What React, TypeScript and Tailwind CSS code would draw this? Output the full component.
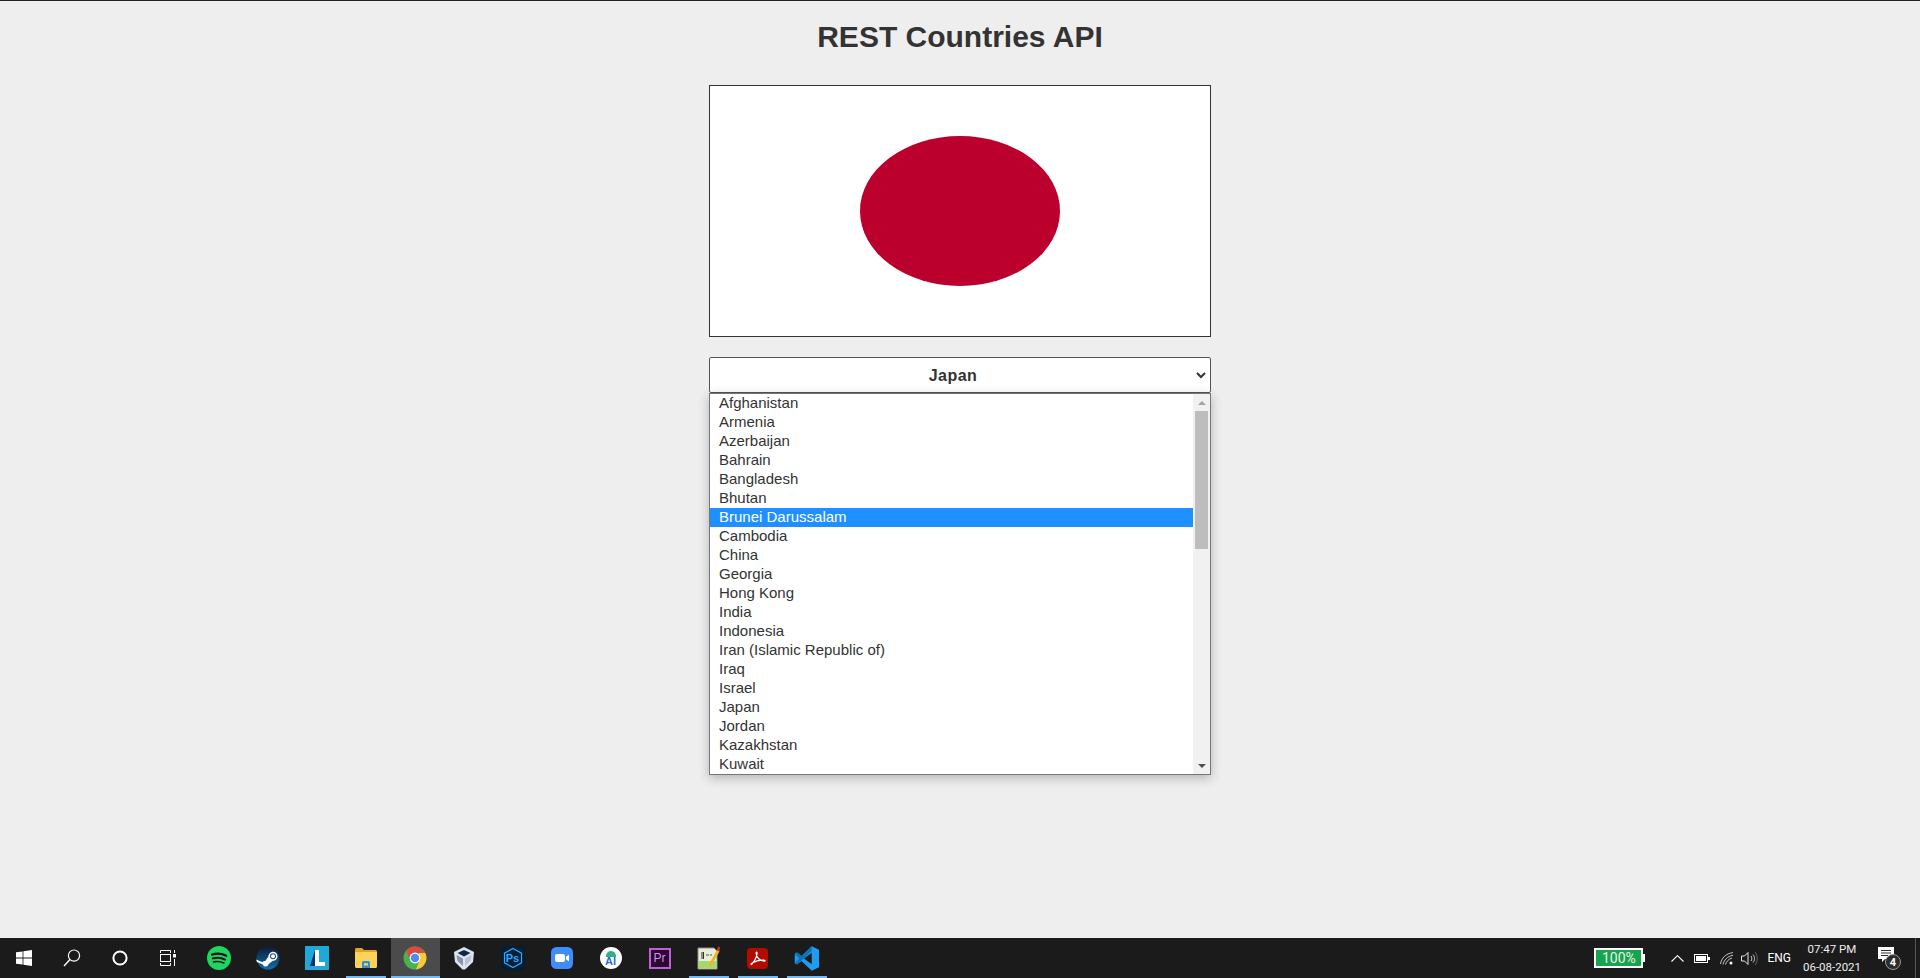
import React from "react";

const countries = ["Afghanistan","Armenia","Azerbaijan","Bahrain","Bangladesh","Bhutan","Brunei Darussalam","Cambodia","China","Georgia","Hong Kong","India","Indonesia","Iran (Islamic Republic of)","Iraq","Israel","Japan","Jordan","Kazakhstan","Kuwait"];

const WinIcon = () => (
  <svg width="16" height="16" viewBox="0 0 16 16" fill="#fff"><path d="M0 2.3 6.6 1.4V7.6H0Z"/><path d="M7.4 1.3 16 0V7.6H7.4Z"/><path d="M0 8.4H6.6V14.6L0 13.7Z"/><path d="M7.4 8.4H16V16L7.4 14.7Z"/></svg>
);
const SearchIcon = () => (
  <svg width="18" height="18" viewBox="0 0 18 18" fill="none" stroke="#fff"><circle cx="11" cy="6.6" r="5.6" strokeWidth="1.2"/><path d="M7 10.6 1 17" strokeWidth="1.4"/></svg>
);
const CortanaIcon = () => (
  <svg width="16" height="16" viewBox="0 0 16 16" fill="none"><circle cx="8" cy="8" r="6.6" stroke="#fff" strokeWidth="2"/></svg>
);
const TaskIcon = () => (
  <svg width="16" height="16" viewBox="0 0 16 16" fill="none" stroke="#fff" strokeWidth="1"><path d="M0.5 0.5H10.5M0.5 3V0.5M10.5 3V0.5"/><rect x="0.5" y="4.5" width="10" height="7"/><path d="M0.5 15.5H10.5M0.5 13V15.5M10.5 13V15.5"/><path d="M14.5 0V3"/><rect x="13" y="4" width="3" height="3.5" fill="#fff" stroke="none"/><path d="M14.5 9V16"/></svg>
);
const SpotifyIcon = () => (
  <svg width="24" height="24" viewBox="0 0 24 24" fill="none"><circle cx="12" cy="12" r="12" fill="#1ed760"/><path d="M5 8.6C9.5 7.3 15 7.6 19.2 9.8" stroke="#111" strokeWidth="2.2" strokeLinecap="round"/><path d="M5.8 12.4C9.8 11.3 14.6 11.7 18 13.6" stroke="#111" strokeWidth="1.9" strokeLinecap="round"/><path d="M6.6 15.9C10 15.1 13.8 15.4 16.8 17" stroke="#111" strokeWidth="1.6" strokeLinecap="round"/></svg>
);
const SteamIcon = () => (
  <svg width="24" height="24" viewBox="0 0 24 24"><defs><linearGradient id="st" x1="0" y1="0" x2="0" y2="1"><stop offset="0" stopColor="#0d1b3a"/><stop offset="1" stopColor="#0f6ea8"/></linearGradient></defs><circle cx="12" cy="12" r="11.5" fill="url(#st)"/><path d="M0 13.5 6.5 16.2C7 15.2 8.4 14.8 9.3 15L12.4 10.6C12.5 8 14.5 5.8 17 5.8C19.6 5.8 21.5 7.9 21.5 10.3C21.5 12.8 19.4 14.9 17 14.8L12.6 18C12.4 19.6 11 20.6 9.6 20.5C8.2 20.4 7.2 19.5 6.8 18.4L1 16Z" fill="#fff"/><circle cx="17" cy="10.3" r="3" fill="#1a4a78"/><circle cx="17" cy="10.3" r="2" fill="#fff"/></svg>
);
const LIcon = () => (
  <svg width="24" height="24" viewBox="0 0 24 24"><rect width="24" height="24" fill="#1fa9d8"/><path d="M10 4 5 20H10Z" fill="#0a2f7a"/><path d="M10 4H14V16H20V20H10Z" fill="#fff"/></svg>
);
const FolderIcon = () => (
  <svg width="22" height="20" viewBox="0 0 22 20"><path d="M0 1.5C0 .7.5 0 1.3 0H7L9 2H20.5C21.3 2 22 2.700 22 3.500V6H0Z" fill="#e0a526"/><path d="M0 4H22V18.500C22 19.300 21.300 20 20.500 20H1.500C.7 20 0 19.300 0 18.500Z" fill="#fbd25a"/><path d="M7 20V14.500C7 14 7.500 13 8.500 13H13.500C14.500 13 15 14 15 14.500V20H13V15.500H9V20Z" fill="#2f8fd8"/><rect x="7" y="17" width="8" height="3" fill="#2f8fd8"/><rect x="9" y="15.500" width="4" height="2" fill="#fbd25a"/></svg>
);
const ChromeIcon = () => (
  <svg width="24" height="24" viewBox="0 0 24 24"><circle cx="12" cy="12" r="11.500" fill="#4caf50"/><path d="M12 .5A11.500 11.500 0 0 1 22 6.600L12 7.500 5.500 11 3.400 4.400A11.500 11.500 0 0 1 12 .5Z" fill="#dd4b3e"/><path d="M22.300 7A11.500 11.500 0 0 1 13 23.400L16.500 14.500 16 7Z" fill="#fcc934"/><circle cx="12" cy="12" r="5.400" fill="#fff"/><circle cx="12" cy="12" r="4.200" fill="#4c8bf5"/></svg>
);
const VBoxIcon = () => (
  <svg width="20" height="23" viewBox="0 0 20 23"><path d="M10 0 20 5 19 15 11 22.500H8.500L1 15 0 5Z" fill="#dfe5ef"/><path d="M10 3 16.500 6 10 9.500 3.500 6Z" fill="#0f2750"/><path d="M2.500 8 9 11.500V19L3.500 14Z" fill="#8a96ab"/><path d="M17.500 8 11 11.500V19L16.500 14Z" fill="#b8c3d6"/></svg>
);
const PsIcon = () => (
  <div className="w-6 h-6 rounded-[4px] bg-[#001e36] relative flex items-center justify-center">
    <svg className="absolute inset-0" width="24" height="24" viewBox="0 0 24 24" fill="none"><path d="M12 2.500 20.500 7.200V16.800L12 21.500 3.500 16.800V7.200Z" stroke="#31a8ff" strokeWidth="1.200"/></svg>
    <span className="relative text-[11px] leading-none font-bold text-[#31a8ff] font-['Liberation_Sans',sans-serif]">Ps</span>
  </div>
);
const ZoomIcon = () => (
  <svg width="22" height="22" viewBox="0 0 22 22"><rect width="22" height="22" rx="5.500" fill="#3f8cff"/><rect x="4" y="7" width="10" height="8" rx="2" fill="#fff"/><path d="M15 9.800 18 7.600V14.400L15 12.200Z" fill="#fff"/></svg>
);
const StudioIcon = () => (
  <div className="w-[22px] h-[22px] rounded-full bg-white relative flex items-end justify-center overflow-hidden">
    <div className="absolute top-[4px] left-[6px] w-[10px] h-[6px] rounded-t-full bg-[#2fae8a]"></div>
    <span className="relative mb-[2px] text-[11px] leading-none font-bold text-[#2b6cd6] font-['Liberation_Sans',sans-serif]">AI</span>
  </div>
);
const PrIcon = () => (
  <div className="w-[22px] h-[21px] bg-[#2a0a33] border-2 border-[#c25ed9] flex items-center justify-center">
    <span className="text-[12px] leading-none text-[#d98df0] font-['Liberation_Sans',sans-serif]">Pr</span>
  </div>
);
const NotepadIcon = () => (
  <svg width="23" height="24" viewBox="0 0 23 24"><path d="M1 2H17L20 5V23H1Z" fill="#e8efd8" stroke="#8a8f80"/><rect x="2" y="15" width="17" height="7.500" fill="#a6d96a"/><path d="M5 6V13M6.500 6V13" stroke="#333" strokeWidth="1"/><path d="M9 9H12M13 9H15" stroke="#555"/><path d="M12 18 20 4 22.500 5.500 14.500 19.500 11.500 21Z" fill="#f0b429"/><path d="M20 4 21 .5 23 1.500 22.500 5.500Z" fill="#c0392b"/></svg>
);
const PdfIcon = () => (
  <svg width="21" height="21" viewBox="0 0 21 21" fill="none"><rect width="21" height="21" rx="4" fill="#b30b00"/><path d="M4 16C6.500 15 9.500 10.500 10 5.500C10.200 3.800 9 3.800 9.200 5.500C9.700 9.500 12.500 12.500 17 13C18.500 13.200 18.500 12.200 17 12.100C13 11.700 7 13.500 4.500 15.500C3.500 16.500 4.300 17 5 16Z" stroke="#fff" strokeWidth="1.300"/></svg>
);
const VSCodeIcon = () => (
  <svg width="25" height="25" viewBox="0 0 100 100"><path d="M71 99 100 85V15L71 1 30 40 12 26 3 31V69L12 74 30 60Z" fill="#1f9cf0"/><path d="M71 1 30 40 12 26 3 31 21 50 3 69 12 74 71 20Z" fill="#0b72b9"/><path d="M71 27V73L40 50Z" fill="#1a1a1a"/></svg>
);

const apps = [
  { icon: <SpotifyIcon /> }, { icon: <SteamIcon /> }, { icon: <LIcon /> },
  { icon: <FolderIcon />, bar: "short" }, { icon: <ChromeIcon />, bar: "active" },
  { icon: <VBoxIcon /> }, { icon: <PsIcon /> }, { icon: <ZoomIcon /> }, { icon: <StudioIcon /> },
  { icon: <PrIcon /> }, { icon: <NotepadIcon />, bar: "short" }, { icon: <PdfIcon />, bar: "short" }, { icon: <VSCodeIcon />, bar: "short" },
];

export default function App() {
  return (
    <div className="h-[978px] flex flex-col overflow-hidden bg-[#eeeeee] border-t border-[#222222] text-[#333333] font-['Liberation_Sans',Arial,sans-serif]">
      <main className="flex-1 flex flex-col items-center">
        <h1 className="mt-[19px] h-[34px] text-[30px] leading-[34px] font-bold">REST Countries API</h1>
        <div className="mt-[31px] w-[502px] h-[252px] border border-[#333333] bg-white">
          <svg className="block w-full h-full" viewBox="0 0 500 250">
            <ellipse cx="250" cy="125" rx="100" ry="75" fill="#bc002d" />
          </svg>
        </div>
        <div className="mt-[20px] w-[502px]">
          <div className="relative h-[36px] border border-[#555555] rounded-[2px] bg-white flex items-center justify-center pr-[14px] pt-[2px]">
            <span className="text-[16px] font-bold tracking-[0.5px]">Japan</span>
            <svg className="absolute right-[4px] top-[14px]" width="10" height="7" viewBox="0 0 10 7" fill="none"><path d="M1 1 5 5 9 1" stroke="#333333" strokeWidth="2" /></svg>
          </div>
          <div className="relative z-10 h-[382px] border border-[#767676] bg-white flex shadow-[0_3px_10px_rgba(0,0,0,0.25)]">
            <ul className="flex-1 overflow-hidden">
              {countries.map((c) => (
                <li key={c} className={c === "Brunei Darussalam" ? "h-[19px] pl-[9px] text-[15px] leading-[17px] bg-[#1e90ff] text-white" : "h-[19px] pl-[9px] text-[15px] leading-[17px]"}>{c}</li>
              ))}
            </ul>
            <div className="w-[17px] bg-[#f1f1f1] flex flex-col">
              <div className="h-[17px] flex items-center justify-center">
                <svg width="8" height="4" viewBox="0 0 8 4"><path d="M4 0 8 4H0Z" fill="#a3a3a3" /></svg>
              </div>
              <div className="ml-[2px] w-[13px] h-[138px] bg-[#bdbdbd]"></div>
              <div className="flex-1"></div>
              <div className="h-[17px] flex items-center justify-center">
                <svg width="8" height="4" viewBox="0 0 8 4"><path d="M0 0H8L4 4Z" fill="#505050" /></svg>
              </div>
            </div>
          </div>
        </div>
      </main>

      <footer className="h-[40px] shrink-0 bg-[#1b1b1b] flex items-stretch text-white font-['Roboto',sans-serif]">
        <div className="w-[48px] flex items-center justify-center"><WinIcon /></div>
        <div className="w-[48px] flex items-center justify-center"><SearchIcon /></div>
        <div className="w-[48px] flex items-center justify-center"><CortanaIcon /></div>
        <div className="w-[48px] flex items-center justify-center"><TaskIcon /></div>
        <div className="ml-[3px] flex">
          {apps.map((a, i) => (
            <div key={i} className={a.bar === "active" ? "relative w-[49px] pr-[2px] flex items-center justify-center bg-[#4b4b4b]" : "relative w-[49px] pr-[2px] flex items-center justify-center"}>
              {a.icon}
              {a.bar === "active" && <div className="absolute bottom-0 left-0 right-0 h-[2px] bg-[#76b9ed]"></div>}
              {a.bar === "short" && <div className="absolute bottom-0 left-[4px] right-[5px] h-[2px] bg-[#76b9ed]"></div>}
            </div>
          ))}
        </div>

        <div className="ml-auto flex items-center">
          <div className="relative mr-[28px] w-[49px] h-[20px] border-2 border-white bg-[#18a34f] flex items-center justify-center">
            <span className="text-[14px] leading-none text-[#e8f5e8]">100%</span>
            <div className="absolute right-[-4px] top-[4px] w-[2px] h-[8px] bg-white"></div>
          </div>
          <svg className="mr-[10px]" width="13" height="7" viewBox="0 0 13 7" fill="none"><path d="M.5 6.500 6.500.7 12.500 6.500" stroke="#fff" strokeWidth="1.100" /></svg>
          <svg className="mr-[10px]" width="16" height="9" viewBox="0 0 16 9"><rect x=".5" y=".5" width="13" height="8" fill="none" stroke="#fff" /><rect x="2" y="2" width="10" height="5" fill="#fff" /><rect x="14" y="3" width="2" height="3" fill="#fff" /></svg>
          <svg className="mr-[7px]" width="14" height="13" viewBox="0 0 14 13" fill="none" stroke="#d8d8d8" strokeWidth=".9"><path d="M.5 12C1.500 6 6 1.500 13 .6M3 12.500C4 8 7.500 4.200 13 3.300M5.500 12.500C6.200 10 8.500 6.800 12 6" /><circle cx="11" cy="11" r="1.500" fill="#fff" stroke="none" /></svg>
          <svg className="mr-[9px]" width="17" height="15" viewBox="0 0 17 15" fill="none" stroke="#e8e8e8"><path d="M.5 5H3.500L7 1.500V13.500L3.500 10H.5Z" strokeWidth="1" /><path d="M10 5C11 6.500 11 8.500 10 10M12 3.500C14 6 14 9 12 11.500" strokeWidth=".9" /><path d="M14 1C17 5 17 10 14 14" strokeWidth=".8" stroke="#777" /></svg>
          <span className="mr-[12px] text-[12px] leading-none">ENG</span>
          <div className="w-[58px] mr-[10px] flex flex-col items-center text-[11.5px] leading-[18px] text-[#eeeeee] whitespace-nowrap">
            <span>07:47 PM</span>
            <span>06-08-2021</span>
          </div>
          <div className="relative w-[24px] h-[24px] mr-[13px] ml-[7px]">
            <svg className="absolute left-0 top-[1px]" width="16" height="16" viewBox="0 0 16 16"><path d="M0 0H16V12H7L4 15V12H0Z" fill="#fff" /><path d="M3 3.500H13M3 6H13M3 8.500H10" stroke="#333" strokeWidth="1" /></svg>
            <div className="absolute left-[7px] top-[8px] w-[16px] h-[16px] rounded-full bg-[#2d2d2d] border border-[#999999] flex items-center justify-center text-[11px] font-bold leading-none">4</div>
          </div>
          <div className="w-[1px] h-full bg-[#555555] mr-[4px]"></div>
        </div>
      </footer>
    </div>
  );
}
